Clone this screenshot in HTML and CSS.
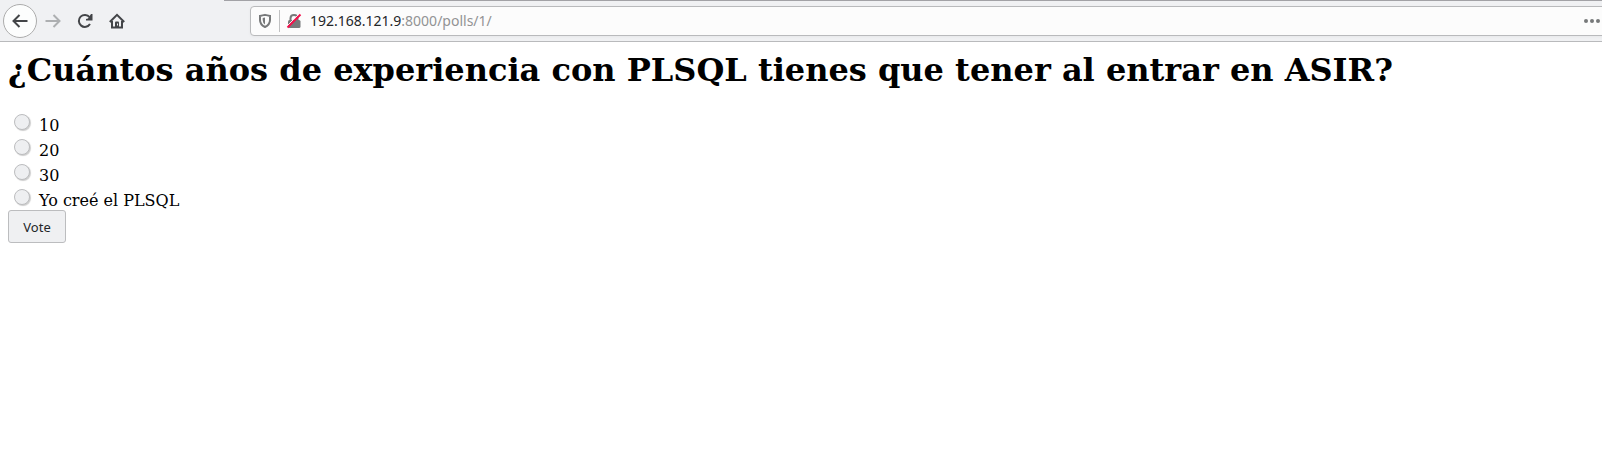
FILE: index.html
```html
<!DOCTYPE html>
<html lang="es">
<head>
<meta charset="utf-8">
<title>Polls</title>
<link rel="stylesheet" href="styles.css">
</head>
<body>
<header class="toolbar">
  <nav class="nav">
    <span class="back"><svg width="16" height="16" viewBox="0 0 16 16"><path d="M15.500 8H2M7.500 2L1.500 8L7.500 14"/></svg></span>
    <span class="tool forward"><svg width="16" height="16" viewBox="0 0 16 16"><path d="M0.500 8H14M8.500 2L14.500 8L8.500 14"/></svg></span>
    <span class="tool"><svg width="16" height="16" viewBox="0 0 16 16"><path d="M13 11A6 6 0 1 1 12.600 4.200"/><path class="solid" d="M14 1H15.500V7.500H9V6L11 5.500Z"/></svg></span>
    <span class="tool"><svg width="16" height="16" viewBox="0 0 16 16"><path d="M0.800 9L8 1.800L15.200 9M3 8V14.500H13V8"/><path class="solid" d="M6 14.500V9.600Q6 8.500 7 8.500H9Q10 8.500 10 9.600V14.500Z"/><path class="knob" d="M8.500 10.500V12.500"/></svg></span>
  </nav>
  <div class="urlbar">
    <svg class="shield" width="14" height="16" viewBox="0 0 14 16"><path d="M7 1.900Q9.500 2.500 12 2.900V7Q12 11.600 7 14Q2 11.600 2 7V2.900Q4.500 2.500 7 1.900Z"/><path class="half" d="M7 4.500V11.500Q4.700 9.800 4.700 7V4.900Z"/></svg>
    <span class="divider"></span>
    <svg class="lock" width="16" height="16" viewBox="0 0 16 16"><path class="shackle" d="M4.500 8V5.300Q4.500 2 8 2T11.500 5.300V8"/><rect x="2" y="7" width="12.500" height="8" rx="1.500"/><path class="gap" d="M0.500 13.500L13.500 0.500"/><path class="slash" d="M1.500 14.500L14.500 1.500"/></svg>
    <span class="url"><b>192.168.121.9</b>:8000/polls/1/</span>
    <svg class="more" width="16" height="4" viewBox="0 0 16 4"><circle cx="2" cy="2" r="2"/><circle cx="8" cy="2" r="2"/><circle cx="14" cy="2" r="2"/></svg>
  </div>
</header>
<main class="page">
  <h1 class="question">¿Cuántos años de experiencia con PLSQL tienes que tener al entrar en ASIR?</h1>
  <form class="poll">
    <label class="choice"><input class="radio" type="radio" name="choice"><span>10</span></label>
    <label class="choice"><input class="radio" type="radio" name="choice"><span>20</span></label>
    <label class="choice"><input class="radio" type="radio" name="choice"><span>30</span></label>
    <label class="choice"><input class="radio" type="radio" name="choice"><span>Yo creé el PLSQL</span></label>
    <button class="vote" type="button">Vote</button>
  </form>
</main>
</body>
</html>
```
FILE: styles.css
```css
*, *::before { box-sizing: border-box; }
body { margin: 0; height: 453px; overflow: hidden; background: #fff; color: #000; font-family: "DejaVu Serif", serif; }
.toolbar { display: flex; height: 42px; background: #f0f1f3; border-bottom: 1px solid #b9babc; }
.nav { display: flex; align-items: center; width: 224px; padding-left: 3px; }
.back { display: flex; align-items: center; justify-content: center; width: 34px; height: 34px; border: 1px solid #acacac; border-radius: 50%; background: #fcfdfd; }
.tool { display: flex; justify-content: center; width: 32px; }
.nav svg { fill: none; stroke: #434548; stroke-width: 2; }
.nav .forward svg { stroke: #adafb1; }
.nav .solid { fill: #434548; stroke: none; }
.nav .knob { stroke: #f0f1f3; stroke-width: 1; }
.urlbar { flex: 1; display: flex; align-items: center; position: relative; padding: 5px 2px 5px 34px; border-top: 1px solid #a2a2a6; }
.urlbar::before { content: ""; position: absolute; left: 26px; top: 5px; right: -4px; height: 30px; background: #fcfcfc; border: 1px solid #b9babc; border-radius: 4px; box-shadow: 0 1px 3px rgba(0,0,0,.04); }
.urlbar > * { position: relative; }
.shield path { fill: none; stroke: #77797a; stroke-width: 2; }
.shield .half { fill: #77797a; stroke: none; }
.divider { width: 1px; height: 22px; margin: 0 6px 0 7px; background: #c0c1c2; }
.lock rect { fill: #77797a; }
.lock path { fill: none; stroke-width: 2; }
.lock .shackle { stroke: #77797a; }
.lock .gap { stroke: #fcfcfc; stroke-width: 1; }
.lock .slash { stroke: #f5114c; }
.url { flex: 1; margin: 0 0 1px 8px; color: #929394; font: 14px/20px "Noto Sans", sans-serif; }
.url b { color: #232629; font-weight: 400; }
.more { fill: #77797a; }
.page { padding: 9px 8px 0; }
.question { margin: 0 0 20px; font-size: 32px; line-height: 38px; font-weight: 700; white-space: nowrap; }
.poll { display: flex; flex-direction: column; align-items: flex-start; padding-top: 3px; }
.choice { display: flex; gap: 8px; height: 25px; padding-left: 6px; font-size: 16px; line-height: 28px; }
.radio { appearance: none; width: 16px; height: 16px; margin: 2px 1px 0 0; border: 1px solid #bcbdbf; border-radius: 50%; background: #eeeff1; box-shadow: 1px 1px 1px rgba(0,0,0,.2); }
.vote { width: 58px; height: 33px; margin-top: -2px; padding: 0; border: 1px solid #bcbdbf; border-radius: 3px; background: #eff0f2; color: #232629; font: 13px/18px "Noto Sans", sans-serif; }
```
